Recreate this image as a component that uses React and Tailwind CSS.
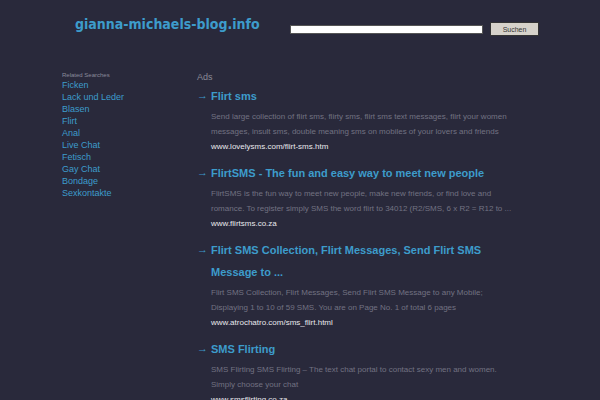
import React from 'react';

const related = [
  'Ficken',
  'Lack und Leder',
  'Blasen',
  'Flirt',
  'Anal',
  'Live Chat',
  'Fetisch',
  'Gay Chat',
  'Bondage',
  'Sexkontakte',
];

const ads = [
  {
    title: 'Flirt sms',
    text: 'Send large collection of flirt sms, flirty sms, flirt sms text messages, flirt your women messages, insult sms, double meaning sms on mobiles of your lovers and friends',
    url: 'www.lovelysms.com/flirt-sms.htm',
  },
  {
    title: 'FlirtSMS - The fun and easy way to meet new people',
    text: 'FlirtSMS is the fun way to meet new people, make new friends, or find love and romance. To register simply SMS the word flirt to 34012 (R2/SMS, 6 x R2 = R12 to ...',
    url: 'www.flirtsms.co.za',
  },
  {
    title: 'Flirt SMS Collection, Flirt Messages, Send Flirt SMS Message to ...',
    text: 'Flirt SMS Collection, Flirt Messages, Send Flirt SMS Message to any Mobile; Displaying 1 to 10 of 59 SMS. You are on Page No. 1 of total 6 pages',
    url: 'www.atrochatro.com/sms_flirt.html',
  },
  {
    title: 'SMS Flirting',
    text: 'SMS Flirting SMS Flirting – The text chat portal to contact sexy men and women. Simply choose your chat',
    url: 'www.smsflirting.co.za',
  },
];

const App = () => {
  return (
    <div className="w-[600px] h-[400px] overflow-hidden bg-[#29293b] font-['Liberation_Sans',Arial,sans-serif]">
      {/* header */}
      <div className="flex items-start h-[60px]">
        <div className="ml-[75px] mt-[16px] w-[215px] whitespace-nowrap text-[14px] font-bold text-[#3d9ccb] font-['DejaVu_Sans_Condensed','DejaVu_Sans',sans-serif] leading-[16px]">
          gianna-michaels-blog.info
        </div>
        <div className="w-[193px] h-[9px] mt-[25px] bg-white border border-[#555]"></div>
        <button className="ml-[7px] mt-[22px] w-[49px] h-[14px] bg-[#d6d2ca] border border-[#333] text-[7px] text-[#333] leading-none">
          Suchen
        </button>
      </div>

      <div className="flex">
        {/* sidebar */}
        <div className="ml-[62px] w-[135px] pt-[11px]">
          <div className="text-[6px] text-[#8a8a9a] leading-[8px]">Related Searches</div>
          {related.map((r) => (
            <div key={r} className="text-[9px] text-[#3d9ccb] leading-[12px]">{r}</div>
          ))}
        </div>

        {/* ads */}
        <div className="w-[330px] pt-[12px]">
          <div className="text-[9px] text-[#8a8a96] leading-[10px] mb-[3px]">Ads</div>
          {ads.map((ad) => (
            <div key={ad.url} className="flex mb-[8px]">
              <div className="w-[14px] text-[11px] font-bold text-[#3d9ccb] leading-[20px]">→</div>
              <div className="w-[306px]">
                <div className="text-[11px] font-bold text-[#3d9ccb] leading-[22px]">{ad.title}</div>
                <div className="mt-[2px] text-[8px] text-[#727282] leading-[15px]">{ad.text}</div>
                <div className="text-[8px] text-[#e8e8ec] leading-[15px]">{ad.url}</div>
              </div>
            </div>
          ))}
        </div>
      </div>
    </div>
  );
};

export default App;
